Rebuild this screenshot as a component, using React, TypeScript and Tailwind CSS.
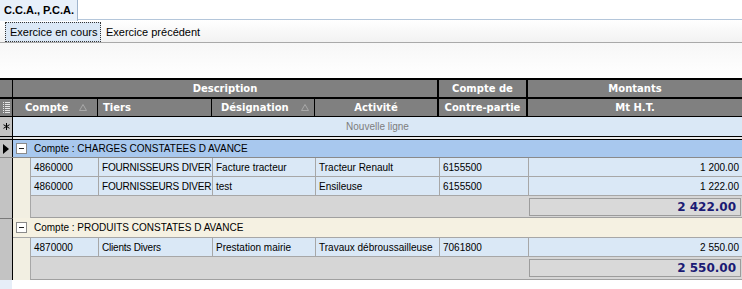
import React from "react";

const F = { fontFamily: '"Liberation Sans", Arial, sans-serif' };
const FB = { fontFamily: '"DejaVu Sans", Verdana, sans-serif' };

function SortTri() {
  return (
    <svg width="8" height="7" viewBox="0 0 8 7" className="shrink-0">
      <path d="M4 0.5 L7.5 6.5 L0.5 6.5 Z" fill="none" stroke="#a8a8a8" strokeWidth="1" />
    </svg>
  );
}

function Minus() {
  return (
    <div className="w-[11px] h-[11px] border border-[#8a8a8a] bg-white flex items-center justify-center shrink-0">
      <div className="w-[5px] h-px bg-[#202020]" />
    </div>
  );
}

function DataRow({ c, t, d, a, cp, m }: { c: string; t: string; d: string; a: string; cp: string; m: string }) {
  const cell = "h-full border-r border-[#a7a7a7] px-[3px] flex items-center overflow-hidden whitespace-nowrap";
  return (
    <div className="flex h-[19px] text-[10px] text-black" style={F}>
      <div className="w-[12px] h-full bg-[#c3c3c3] border-r border-black box-content" />
      <div className="w-[17px] h-full bg-[#f2efe2]" />
      <div className="flex flex-1 h-full bg-[#dae8f6] border-b border-[#a7a7a7] border-l border-l-[#a7a7a7]">
        <div className={`${cell} w-[68px]`}>{c}</div>
        <div className={`${cell} w-[114px] tracking-[-0.2px]`}>{t}</div>
        <div className={`${cell} w-[103px]`}>{d}</div>
        <div className={`${cell} w-[124px]`}>{a}</div>
        <div className={`${cell} w-[89px]`}>{cp}</div>
        <div className="h-full flex-1 px-[3px] flex items-center justify-end">{m}</div>
      </div>
    </div>
  );
}

function SumRow({ total, h }: { total: string; h: string }) {
  return (
    <div className={`flex ${h}`}>
      <div className="w-[12px] h-full bg-[#c3c3c3] border-r border-black box-content" />
      <div className="w-[17px] h-full bg-[#f2efe2]" />
      <div className="flex flex-1 h-full bg-[#d6d6d6] border-b border-[#a0a0a0] border-l border-l-[#a7a7a7] items-center">
        <div className="w-[498px]" />
        <div
          className="flex-1 mr-[1px] h-[18px] border border-[#9c9c9c] bg-[#d9d9d9] flex items-center justify-end pr-[4px] text-[12px] font-bold text-[#1b1b74]"
          style={FB}
        >
          {total}
        </div>
      </div>
    </div>
  );
}

export default function App() {
  const hdr = "h-full flex items-center text-white font-bold text-[10px] border-r border-black whitespace-nowrap";
  return (
    <div className="w-[742px] h-[289px] bg-white overflow-hidden relative" style={F}>
      {/* top tab strip */}
      <div className="flex h-[20px] border-b border-[#b4c6da]">
        <div className="w-[78px] h-[21px] bg-[#e7f0fa] border-r border-[#9fb4cc] flex items-center pl-[4px] text-[11px] font-bold text-black whitespace-nowrap">
          C.C.A., P.C.A.
        </div>
        <div className="flex-1" />
      </div>
      {/* sub tabs */}
      <div className="flex h-[23px] items-end border-b border-[#a9a9a9] bg-gradient-to-b from-white to-[#f2f2f2]">
        <div className="ml-[5px] w-[96px] h-[20px] bg-[#dbe8f6] border border-dotted border-[#333] flex items-center pl-[4px] text-[11px] text-black whitespace-nowrap">
          Exercice en cours
        </div>
        <div className="h-[20px] flex items-center pl-[5px] text-[11px] text-black whitespace-nowrap">Exercice précédent</div>
      </div>
      <div className="h-[35px] bg-gradient-to-b from-[#f7f7f7] to-white" />

      {/* grid */}
      <div className="border-t-2 border-black">
        {/* header row 1 */}
        <div className="flex h-[19px] bg-[#808080] border-b-2 border-black" style={FB}>
          <div className="w-[12px] h-full border-r border-black box-content" />
          <div className={`${hdr} w-[426px] justify-center border-r-2`}>Description</div>
          <div className={`${hdr} w-[89px] justify-center border-r-2`}>Compte de</div>
          <div className={`${hdr} flex-1 justify-center border-r-0`}>Montants</div>
        </div>
        {/* header row 2 */}
        <div className="flex h-[18px] bg-[#808080] border-b border-black" style={FB}>
          <div className="w-[12px] h-full border-r border-black box-content flex items-center justify-center">
            <svg width="7" height="11" viewBox="0 0 7 11">
              {[0, 2, 4, 6, 8, 10].map((y) => (
                <g key={y}>
                  <rect x="0" y={y} width="1" height="1" fill="#e8e8e8" />
                  <rect x="2" y={y} width="5" height="1" fill="#e8e8e8" />
                </g>
              ))}
            </svg>
          </div>
          <div className={`${hdr} w-[85px] pl-[12px] pr-[10px] justify-between`}>
            <span>Compte</span>
            <SortTri />
          </div>
          <div className={`${hdr} w-[114px] pl-[5px]`}>Tiers</div>
          <div className={`${hdr} w-[103px] pl-[9px] pr-[5px] justify-between`}>
            <span>Désignation</span>
            <SortTri />
          </div>
          <div className={`${hdr} w-[124px] justify-center border-r-2`}>Activité</div>
          <div className={`${hdr} w-[89px] justify-center border-r-2`}>Contre-partie</div>
          <div className={`${hdr} flex-1 justify-center border-r-0`}>Mt H.T.</div>
        </div>
        {/* new row */}
        <div className="flex h-[20px] border-b border-black">
          <div className="w-[12px] h-full bg-[#c3c3c3] border-r border-black box-content flex items-center justify-center">
            <svg width="7" height="7" viewBox="0 0 7 7">
              <path d="M3.5 0 V7 M0.5 1.7 L6.5 5.3 M0.5 5.3 L6.5 1.7" stroke="#000" strokeWidth="1" />
            </svg>
          </div>
          <div className="flex-1 h-full bg-[#dae8f6] flex items-center justify-center text-[10px] text-[#7d7d7d]">
            Nouvelle ligne
          </div>
        </div>
        <div className="flex h-[3px] border-b border-black">
          <div className="w-[12px] h-full bg-[#c3c3c3] border-r border-black box-content" />
          <div className="flex-1 bg-[#ececec]" />
        </div>

        {/* group 1 */}
        <div className="flex h-[18px] border-b border-[#8a8a8a]">
          <div className="w-[12px] h-full bg-[#c3c3c3] border-r border-black box-content flex items-center justify-center">
            <svg width="6" height="10" viewBox="0 0 6 10">
              <path d="M0 0 L6 5 L0 10 Z" fill="#000" />
            </svg>
          </div>
          <div className="flex-1 h-full bg-[#a8c8ee] flex items-center pl-[3px] gap-[7px] text-[10px] text-black">
            <Minus />
            <span>Compte : CHARGES CONSTATEES D AVANCE</span>
          </div>
        </div>
        <DataRow c="4860000" t="FOURNISSEURS DIVER" d="Facture tracteur" a="Tracteur Renault" cp="6155500" m="1 200.00" />
        <DataRow c="4860000" t="FOURNISSEURS DIVER" d="test" a="Ensileuse" cp="6155500" m="1 222.00" />
        <SumRow total="2 422.00" h="h-[22px]" />

        {/* group 2 */}
        <div className="flex h-[20px] border-b border-[#a7a7a7]">
          <div className="w-[12px] h-full bg-[#c3c3c3] border-r border-black box-content border-t border-t-[#7a7a7a]" />
          <div className="flex-1 h-full bg-[#f5f1e2] flex items-center pl-[3px] gap-[7px] text-[10px] text-black">
            <Minus />
            <span>Compte : PRODUITS CONSTATES D AVANCE</span>
          </div>
        </div>
        <DataRow c="4870000" t="Clients Divers" d="Prestation mairie" a="Travaux débroussailleuse" cp="7061800" m="2 550.00" />
        <SumRow total="2 550.00" h="h-[23px]" />
      </div>
      <div className="flex h-[10px]">
        <div className="w-[12px] bg-[#e6eef8]" />
      </div>
    </div>
  );
}
